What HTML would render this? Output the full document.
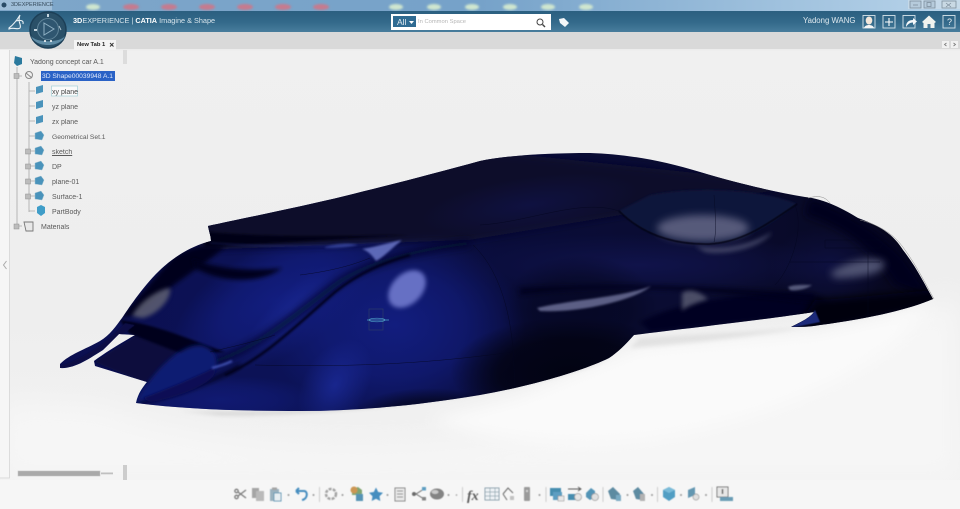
<!DOCTYPE html>
<html><head><meta charset="utf-8"><style>
html,body{margin:0;padding:0;background:#f3f3f3}
#p{position:relative;width:960px;height:509px;overflow:hidden;font-family:"Liberation Sans",sans-serif;background:#f2f2f2}
.t{position:absolute;font-size:7px;color:#5a5a5a;white-space:nowrap;line-height:9px;filter:blur(.25px)}
</style></head><body><div id="p">
<svg width="960" height="509" style="position:absolute;left:0;top:0" viewBox="0 0 960 509">
<defs>
<linearGradient id="bg" x1="0" y1="0" x2="0" y2="1"><stop offset="0" stop-color="#f0f0f0"/><stop offset=".6" stop-color="#eeeeee"/><stop offset="1" stop-color="#f2f2f2"/></linearGradient>
<linearGradient id="hd" x1="0" y1="0" x2="0" y2="1"><stop offset="0" stop-color="#2b5f80"/><stop offset=".5" stop-color="#33698a"/><stop offset="1" stop-color="#4a7f9e"/></linearGradient>
<linearGradient id="tb" x1="0" y1="0" x2="1" y2="0"><stop offset="0" stop-color="#7ea6c9"/><stop offset=".5" stop-color="#76a2c9"/><stop offset="1" stop-color="#b8d4ea"/></linearGradient>
<linearGradient id="body" gradientUnits="userSpaceOnUse" x1="60" y1="0" x2="933" y2="0"><stop offset="0" stop-color="#0b0f50"/><stop offset=".3" stop-color="#0c1358"/><stop offset=".5" stop-color="#090c3a"/><stop offset=".75" stop-color="#0a0c30"/><stop offset="1" stop-color="#06061c"/></linearGradient>
<radialGradient id="gBlue"><stop offset="0" stop-color="#121d7e"/><stop offset=".55" stop-color="#121d7e" stop-opacity=".65"/><stop offset="1" stop-color="#121d7e" stop-opacity="0"/></radialGradient>
<radialGradient id="gBright"><stop offset="0" stop-color="#1b2a98"/><stop offset="1" stop-color="#1b2a98" stop-opacity="0"/></radialGradient>
<radialGradient id="gDark"><stop offset="0" stop-color="#020312"/><stop offset=".6" stop-color="#020312" stop-opacity=".8"/><stop offset="1" stop-color="#020312" stop-opacity="0"/></radialGradient>
<radialGradient id="gNavy"><stop offset="0" stop-color="#10134a"/><stop offset="1" stop-color="#10134a" stop-opacity="0"/></radialGradient>
<filter id="b1" filterUnits="userSpaceOnUse" x="0" y="0" width="960" height="509"><feGaussianBlur stdDeviation="1"/></filter>
<filter id="b2" filterUnits="userSpaceOnUse" x="0" y="0" width="960" height="509"><feGaussianBlur stdDeviation="2"/></filter>
<filter id="b4" filterUnits="userSpaceOnUse" x="0" y="0" width="960" height="509"><feGaussianBlur stdDeviation="4"/></filter>
<filter id="b8" filterUnits="userSpaceOnUse" x="0" y="0" width="960" height="509"><feGaussianBlur stdDeviation="8"/></filter>
<filter id="b14" filterUnits="userSpaceOnUse" x="0" y="0" width="960" height="509"><feGaussianBlur stdDeviation="14"/></filter>
<filter id="b05" filterUnits="userSpaceOnUse" x="0" y="0" width="960" height="509"><feGaussianBlur stdDeviation=".4"/></filter>
<clipPath id="car"><path d="M60 364C70 354 84 350 100 341C110 335 116 326 122 318C133 302 150 276 172 260C184 251 196 245 211 241C211 236 209 232 208 226C240 219 300 207 345 196C390 185 440 172 480 161C510 155 550 153 590 153C625 154 660 160 700 172C740 184 775 192 805 197C825 199 845 210 858 218C880 226 892 233 903 250C917 268 925 285 933 299C905 311 860 320 820 325C810 327 800 327 791 327C798 323 809 319 814 312C770 319 690 328 634 335C625 345 618 352 609 358C580 372 530 386 480 395C420 405 360 411 300 411C250 411 190 410 136 403C138 393 143 387 147 382L95 366L94 361C106 352 118 345 135 335L119 334L103 350C90 358 75 369 60 368Z"/></clipPath>
</defs>
<rect width="960" height="509" fill="url(#bg)"/>
<!-- floor -->
<path d="M100 405C260 470 620 470 940 300L960 300V480H0V400Z" fill="#f6f6f6" filter="url(#b14)"/>
<path d="M520 395L640 345L820 330L930 305C920 340 800 420 640 440C560 450 480 440 430 420Z" fill="#fafafa" filter="url(#b8)"/>
<path d="M180 411C300 416 440 402 610 358C520 396 340 416 220 415Z" fill="#cfcfcf" filter="url(#b2)"/>
<path d="M640 338L800 328L925 303C850 323 740 340 630 348Z" fill="#dadada" filter="url(#b2)" opacity=".7"/>
<!-- car -->
<path d="M60 364C70 354 84 350 100 341C110 335 116 326 122 318C133 302 150 276 172 260C184 251 196 245 211 241C211 236 209 232 208 226C240 219 300 207 345 196C390 185 440 172 480 161C510 155 550 153 590 153C625 154 660 160 700 172C740 184 775 192 805 197C825 199 845 210 858 218C880 226 892 233 903 250C917 268 925 285 933 299C905 311 860 320 820 325C810 327 800 327 791 327C798 323 809 319 814 312C770 319 690 328 634 335C625 345 618 352 609 358C580 372 530 386 480 395C420 405 360 411 300 411C250 411 190 410 136 403C138 393 143 387 147 382L95 366L94 361C106 352 118 345 135 335L119 334L103 350C90 358 75 369 60 368Z" fill="url(#body)"/>
<g clip-path="url(#car)">
<!-- soft colour fields -->
<ellipse cx="395" cy="325" rx="130" ry="95" fill="url(#gBlue)"/>
<ellipse cx="275" cy="300" rx="115" ry="55" transform="rotate(-30 275 300)" fill="url(#gBlue)"/>
<ellipse cx="335" cy="385" rx="32" ry="50" transform="rotate(30 335 385)" fill="url(#gBright)" opacity=".8"/>
<ellipse cx="290" cy="310" rx="60" ry="18" transform="rotate(-45 290 310)" fill="url(#gBright)" opacity=".6"/>
<ellipse cx="220" cy="400" rx="100" ry="25" fill="url(#gBlue)" opacity=".7"/>
<ellipse cx="570" cy="372" rx="120" ry="55" fill="url(#gDark)"/>
<ellipse cx="430" cy="418" rx="80" ry="30" fill="url(#gDark)" opacity=".7"/>
<ellipse cx="640" cy="265" rx="190" ry="32" fill="url(#gNavy)"/>
<ellipse cx="830" cy="265" rx="60" ry="40" fill="url(#gNavy)" opacity=".7"/>
<ellipse cx="580" cy="310" rx="80" ry="55" fill="url(#gDark)" opacity=".45"/>
<!-- roof -->
<path d="M195 215L480 150L810 185L640 212L470 240L200 250Z" fill="#08082a" filter="url(#b4)"/>
<ellipse cx="530" cy="205" rx="110" ry="28" transform="rotate(-8 530 205)" fill="url(#gNavy)" opacity=".7"/>
<path d="M205 232C280 238 340 236 410 235L205 247Z" fill="#040414" filter="url(#b1)"/>
<path d="M210 243C280 248 340 247 400 242" fill="none" stroke="#2a3490" stroke-width="1" filter="url(#b1)" opacity=".6"/>
<!-- sill under crease near front -->
<path d="M640 322C680 300 760 290 815 294L812 314L650 332Z" fill="#050620" filter="url(#b2)"/>
<path d="M520 295C600 285 700 288 830 305L820 296C740 286 620 282 520 288Z" fill="#03031a" filter="url(#b2)" opacity=".8"/>
<!-- nose -->
<path d="M810 198C840 208 880 230 905 258L935 300L895 285C870 245 840 225 805 215Z" fill="#04041a" filter="url(#b4)"/>
<path d="M815 300C860 298 900 292 940 290L935 305L830 328L795 328Z" fill="#03030c" filter="url(#b4)"/>
<path d="M790 328C800 322 812 316 815 310L820 322Z" fill="#1c2a7a" filter="url(#b05)"/>
<!-- crease -->
<path d="M212 362C255 350 295 315 335 285C365 263 415 250 470 243" fill="none" stroke="#05072a" stroke-width="6" filter="url(#b4)"/>
<path d="M225 375C265 358 300 322 335 292C360 272 385 262 410 255" fill="none" stroke="#04051f" stroke-width="2.500" filter="url(#b1)"/>
<path d="M140 402C175 395 215 382 240 365" fill="none" stroke="#04051c" stroke-width="3" filter="url(#b2)"/>
<!-- rear top -->
<path d="M172 258C190 246 205 244 225 246C210 262 170 285 135 315L120 318Z" fill="#05061f" filter="url(#b2)"/>
<path d="M192 258C210 268 250 272 282 268C265 282 225 285 195 268Z" fill="#03031a" filter="url(#b2)"/>
<path d="M132 316C138 304 155 290 170 288C172 300 155 316 142 318Z" fill="#5e6072" filter="url(#b2)" opacity=".85"/>
<!-- fins -->
<path d="M94 362L135 336L180 350L148 384Z" fill="#070a3c" filter="url(#b1)"/>
<path d="M120 320C160 325 195 342 225 352L185 355L130 334Z" fill="#03041c" filter="url(#b1)"/>
<path d="M60 366C80 360 105 345 125 323L135 325L110 345C90 358 75 368 60 368Z" fill="#090e44" filter="url(#b05)"/>
<path d="M136 402C150 375 178 345 200 345C216 347 218 362 216 368C190 385 160 398 136 402Z" fill="#111c72" filter="url(#b2)"/>
<path d="M143 398C170 388 200 375 214 368C222 380 180 398 150 402Z" fill="#0a1055" filter="url(#b1)"/>
<path d="M212 368C220 366 226 364 232 361" stroke="#4a5cc0" stroke-width="2" fill="none" filter="url(#b1)"/>
<!-- window -->
<path d="M619 211C640 232 665 243 710 244C745 242 770 225 797 204C765 190 700 185 650 195Z" fill="#10133a" filter="url(#b1)"/>
<ellipse cx="703" cy="228" rx="46" ry="13" fill="#575a7a" filter="url(#b4)"/>
<path d="M695 246C725 250 750 245 772 232C762 248 725 256 705 252Z" fill="#3c3f62" filter="url(#b2)"/>
<path d="M619 211C640 232 670 245 710 244C745 242 770 222 797 204" fill="none" stroke="#03030c" stroke-width="1.200" filter="url(#b05)"/>
<!-- highlights -->
<path d="M830 273C845 262 870 255 884 262C888 270 870 278 835 278Z" fill="#4f5272" filter="url(#b4)"/>
<path d="M788 287C795 284 805 285 812 285C805 290 795 291 790 290Z" fill="#55587a" filter="url(#b1)"/>
<path d="M537 308C570 300 625 297 651 286C635 300 580 313 540 311Z" fill="#5b5f85" filter="url(#b1)"/>
<path d="M682 293C690 288 700 292 708 299C695 303 685 307 682 311Z" fill="#4c4e66" filter="url(#b2)"/>
<ellipse cx="407" cy="289" rx="22" ry="15" transform="rotate(-45 407 289)" fill="#6670c4" filter="url(#b2)"/>
<path d="M362 249C380 246 395 241 402 240C392 248 385 256 376 261C372 255 368 251 362 249Z" fill="#6c78c8" filter="url(#b1)" opacity=".85"/>
<path d="M325 247C340 243 350 243 358 245C345 248 335 248 325 248Z" fill="#4050a8" filter="url(#b1)" opacity=".7"/>
<!-- surface lines -->
<g fill="none" stroke="#050720" stroke-width=".5" opacity=".8">
<path d="M255 365C340 367 420 365 512 352"/><path d="M210 352C240 345 260 340 275 335"/>
<path d="M473 245C500 270 516 320 514 390"/><path d="M714 195C716 220 716 235 714 242"/>
<path d="M795 205C805 230 790 270 775 285"/>
<path d="M825 240L885 240L880 248L825 248Z"/><path d="M868 245V320"/><path d="M300 275C340 270 360 262 370 258"/>
<path d="M619 211C580 198 530 222 480 225"/><path d="M790 262H880"/>
</g>
</g>
<path d="M808 198C820 195 825 197 830 203M860 220C880 225 895 235 905 250C918 268 926 285 934 299" fill="none" stroke="#888" stroke-width=".5"/>
<!-- axis widget -->
<g fill="none" stroke="#2a3a6a" stroke-width=".7"><rect x="369" y="309" width="14" height="21"/><path d="M367 320H389" stroke="#4fa0c8" stroke-width=".8"/><ellipse cx="377" cy="320" rx="8" ry="1.800" stroke="#4fa0c8" stroke-width=".6"/></g>
<!-- title bar -->
<rect width="960" height="12" fill="url(#tb)"/>
<g filter="url(#b1)"><g fill="#c67a8e"><ellipse cx="131" cy="7" rx="8" ry="3"/><ellipse cx="169" cy="7" rx="8" ry="3"/><ellipse cx="207" cy="7" rx="8" ry="3"/><ellipse cx="245" cy="7" rx="8" ry="3"/><ellipse cx="283" cy="7" rx="8" ry="3"/><ellipse cx="321" cy="7" rx="8" ry="3"/></g>
<g fill="#cfe6cf"><ellipse cx="93" cy="7" rx="7" ry="3"/><ellipse cx="396" cy="7" rx="7" ry="3"/><ellipse cx="434" cy="7" rx="7" ry="3"/><ellipse cx="472" cy="7" rx="7" ry="3"/><ellipse cx="510" cy="7" rx="7" ry="3"/><ellipse cx="548" cy="7" rx="7" ry="3"/><ellipse cx="586" cy="7" rx="7" ry="3"/></g></g>
<rect x="0" y="0" width="52" height="10" fill="#a8c4dc" opacity=".8"/>
<circle cx="4" cy="5" r="2.500" fill="#2b4c66"/>
<rect x="908" y="0" width="52" height="9" fill="#c9dbe8" opacity=".8"/>
<g fill="none" stroke="#7d8e9c" stroke-width=".8"><rect x="910" y="1" width="11" height="7" fill="#b6cbdb"/><path d="M913 5H918"/><rect x="924" y="1" width="11" height="7" fill="#b6cbdb"/><rect x="927" y="2.500" width="4" height="4"/><rect x="942" y="1" width="14" height="7" fill="#c9d9e4"/><path d="M946 3L951 7M951 3L946 7"/></g>
<!-- header -->
<rect y="11" width="960" height="22" fill="url(#hd)"/>
<rect y="32" width="960" height="18" fill="#d9d9d9"/>
<rect y="49" width="960" height="1.500" fill="#ececec"/>
<path d="M9 28C13 25 17 20 20 15C17 22 22 25 20 28C18 30 14 27 9 29ZM16 21C20 20 24 20 23 24" fill="none" stroke="#e8f0f5" stroke-width="1.100"/>
<!-- compass -->
<circle cx="48" cy="30" r="18" fill="#2a5068"/><circle cx="48" cy="30" r="18" fill="none" stroke="#1c3f57" stroke-width="1.500"/>
<path d="M31 36C35 48 61 48 65 36C60 43 36 43 31 36Z" fill="#5f8ca6"/>
<circle cx="48" cy="29" r="10.500" fill="#2f5670" stroke="#5f8499" stroke-width="1"/>
<path d="M44 23L54 29L44 35Z" fill="none" stroke="#8fb0c3" stroke-width="1"/>
<rect x="47" y="14" width="2" height="3" fill="#c5d5df"/><rect x="34" y="29" width="3" height="2" fill="#c5d5df"/><path d="M59 26L61 30" stroke="#a9bfcc"/><circle cx="45" cy="41" r="1" fill="#fff"/><circle cx="51" cy="41" r="1" fill="#fff"/>
<!-- search -->
<rect x="391" y="14" width="160" height="16" fill="#fff"/>
<rect x="393" y="16" width="23" height="11" fill="#2f6b92"/>
<path d="M409 21H414L411.500 24Z" fill="#fff"/>
<circle cx="540" cy="22" r="3" fill="none" stroke="#444" stroke-width="1"/><path d="M542.500 24.500L545 27" stroke="#444" stroke-width="1.400"/>
<path d="M559 19L564 18L569 23L565 27L560 23Z" fill="#f4f7f9"/>
<!-- right icons -->
<g fill="none" stroke="#d8e5ec" stroke-width=".9"><rect x="863" y="15.500" width="12" height="12.500"/><rect x="883" y="15.500" width="12" height="12.500"/><rect x="903" y="15.500" width="12" height="12.500"/><rect x="943" y="15.500" width="12" height="12.500"/><path d="M889 18V26M885 22H893" stroke="#fff" stroke-width="1.100"/></g>
<ellipse cx="869" cy="20.500" rx="3.300" ry="4" fill="#f2e6da"/><path d="M864 28C865 24 873 24 874 28Z" fill="#f5f5f5"/>
<path d="M906 27C906 22 909 20 913 20V18L917 21.500L913 25V22.500C910 22.500 908 24 906 27Z" fill="#f5f8fa"/>
<path d="M922 22L929 15.500L936 22L934.500 23V28H923.500V23Z" fill="#f0f2ee"/><rect x="927.500" y="24" width="3" height="4" fill="#4b7b98"/>
<!-- tab arrows -->
<rect x="942" y="41" width="7" height="7" fill="#f1f1f1"/><rect x="951" y="41" width="7" height="7" fill="#f1f1f1"/><path d="M946.500 43L944.500 44.500L946.500 46M953.500 43L955.500 44.500L953.500 46" fill="none" stroke="#777" stroke-width=".8"/>
<!-- tab -->
<rect x="74" y="40" width="42" height="10" fill="#f4f4f4"/>
<path d="M110 43L113.500 46.500M113.500 43L110 46.500" stroke="#333" stroke-width="1"/>
<!-- left strip -->
<rect x="0" y="50" width="9" height="427" fill="#f6f6f6"/><path d="M9.500 50V478H0" fill="none" stroke="#d6d6d6" stroke-width=".8"/>
<path d="M6.500 261L3.500 265L6.500 269" fill="none" stroke="#aaa" stroke-width="1"/>
<rect x="123" y="50" width="4" height="14" fill="#dcdcdc"/>
<!-- bottom scroll -->
<rect x="18" y="471" width="82" height="5" fill="#a9a9a9" stroke="#c4c4c4" stroke-width=".6"/>
<rect x="101" y="472.500" width="12" height="1.800" fill="#c0c0c0"/>
<rect x="123" y="465" width="4" height="15" fill="#cccccc"/>
<rect y="480" width="960" height="29" fill="#f6f6f6"/>
<!-- tree lines -->
<g fill="none" stroke="#a8a8a8" stroke-width=".8">
<path d="M17 67V226M17 76H22M29 82V212M29 91H35M29 106H35M29 121H35M29 136H35M29 151H35M29 166H35M29 181H35M29 196H35M29 211H35M17 226H22"/>
</g>
<g fill="#bcbcbc" stroke="#8f8f8f" stroke-width=".5"><rect x="14" y="73.500" width="5" height="5"/><rect x="25.500" y="149" width="5" height="5"/><rect x="25.500" y="164" width="5" height="5"/><rect x="25.500" y="179" width="5" height="5"/><rect x="25.500" y="194" width="5" height="5"/><rect x="14" y="224" width="5" height="5"/></g>
<path d="M15 56L22 58V64L17 66L14 63Z" fill="#2b7a9e"/>
<circle cx="29" cy="75" r="3.500" fill="none" stroke="#888" stroke-width="1"/><path d="M26 73L32 78" stroke="#888"/>
<g fill="#4a93bb"><path d="M36 87L43 85V92L36 94Z"/><path d="M36 102L43 100V107L36 109Z"/><path d="M36 117L43 115V122L36 124Z"/></g>
<g fill="#4a93bb" stroke="#9bbfcf" stroke-width=".5"><path d="M35 133L41 131L44 135L42 140L35 139Z"/><path d="M35 148L41 146L44 150L42 155L35 154Z"/><path d="M35 163L41 161L44 165L42 170L35 169Z"/><path d="M35 178L41 176L44 180L42 185L35 184Z"/><path d="M35 193L41 191L44 195L42 200L35 199Z"/></g>
<path d="M37 207L41 205L45 207V213L41 216L37 213Z" fill="#3f9dc8"/>
<path d="M24 222H33V231H26Z" fill="#e8e8e8" stroke="#777" stroke-width=".9"/>
<rect x="41" y="71" width="74" height="10" fill="#2a62c6"/>
<rect x="51.500" y="86" width="26" height="10" fill="#fafafa" stroke="#a4d0d8" stroke-width=".7"/>
<!-- toolbar icons -->
<g filter="url(#b05)" opacity=".88">
<g fill="none" stroke="#6c6c6c" stroke-width="1.300"><circle cx="236.500" cy="491" r="1.700"/><circle cx="236.500" cy="497" r="1.700"/><path d="M238 492L246 498M238 496L246 490"/></g>
<rect x="252" y="488" width="7" height="10" fill="#9a9a9a"/><rect x="256" y="491" width="8" height="10" fill="#b2b2b2"/>
<rect x="270" y="489" width="9" height="12" fill="#8fa9b8"/><rect x="274" y="493" width="7" height="8" fill="#e5eef2" stroke="#4d8fb0"/><rect x="272" y="487.500" width="5" height="2.500" fill="#999"/>
<path d="M296 491H304C308 491 308 499 302 500M296 491L299 488M296 491L299 494" fill="none" stroke="#2f7fb8" stroke-width="2"/>
<circle cx="331" cy="494" r="5" fill="none" stroke="#9a9a9a" stroke-width="2.500" stroke-dasharray="3 1.200"/>
<path d="M352 489L358 487L362 490V495H352Z" fill="#6f9a5e"/><circle cx="354" cy="490" r="3.500" fill="#c78a3e"/><rect x="356" y="494" width="7" height="7" fill="#3f87ad"/>
<path d="M376 487.500L378.200 492L383 492.800L379.500 496.300L380.300 501L376 498.800L371.700 501L372.500 496.300L369 492.800L373.800 492Z" fill="#2f80b8"/>
<rect x="395" y="488" width="10" height="13" fill="#e8e8e8" stroke="#777"/><path d="M397 491H403M397 494H403M397 497H403" stroke="#777" stroke-width=".9"/>
<path d="M416 494L424 489M416 494L424 499" stroke="#555" stroke-width="1"/><circle cx="414" cy="494" r="2" fill="#555"/><rect x="422" y="487" width="4" height="3.500" fill="#4a93bb"/><rect x="422" y="497" width="4" height="3.500" fill="#777"/>
<ellipse cx="437" cy="494" rx="7" ry="5.500" fill="#757575"/><ellipse cx="435" cy="492" rx="3.500" ry="2" fill="#c4c4c4"/>
<text x="467" y="500" font-family="Liberation Serif" font-style="italic" font-weight="bold" font-size="14" fill="#444">fx</text>
<rect x="485" y="488" width="14" height="12" fill="#eef3f6" stroke="#7f97a5"/><path d="M485 492H499M485 496H499M490 488V500M495 488V500" stroke="#7f97a5" stroke-width=".7"/>
<path d="M503 494L508 488L513 493M503 494L507 500" fill="none" stroke="#555" stroke-width="1"/><rect x="510" y="496" width="4" height="4" fill="#bbb"/>
<rect x="524" y="487" width="6" height="14" rx="1" fill="#8e8e8e"/><rect x="526" y="490" width="2" height="2" fill="#ccc"/>
<rect x="550" y="488" width="11" height="8" fill="#2f7fa6"/><rect x="553" y="492" width="9" height="8" fill="#4a93bb"/><rect x="558" y="496" width="6" height="5" fill="#e6e6e6" stroke="#777" stroke-width=".5"/>
<path d="M568 489H581M578 487L581 489L578 491" fill="none" stroke="#444" stroke-width=".9"/><rect x="568" y="494" width="8" height="6" fill="#2f7fa6"/><circle cx="578" cy="497" r="3.500" fill="#e3e3e3" stroke="#888" stroke-width=".7"/>
<path d="M586 493L591 488L595 491V497L590 500L586 497Z" fill="#3d87ae"/><circle cx="595" cy="497" r="3.500" fill="#dedede" stroke="#888" stroke-width=".7"/>
<path d="M608 491L613 487L620 494L619 500L611 499Z" fill="#4a7d96"/><rect x="616" y="495" width="5" height="6" fill="#6aa1bd"/>
<path d="M633 491L638 487L644 494L642 500L636 499Z" fill="#4a7d96"/><rect x="640" y="494" width="5" height="7" fill="#a9a9a9"/>
<path d="M663 490L669 487L675 490V497L669 501L663 497Z" fill="#3b92bd"/><path d="M663 490L669 493L675 490L669 487Z" fill="#6ab3d4"/>
<path d="M688 490L695 487V495L688 498Z" fill="#4f8aa8"/><circle cx="696" cy="497" r="3" fill="#ddd" stroke="#888" stroke-width=".7"/>
<rect x="717" y="487" width="11" height="10" fill="#e5e5e5" stroke="#666"/><path d="M722.500 489V494" stroke="#444" stroke-width="1.500"/><rect x="720" y="497" width="13" height="4" fill="#5790ad"/>
<g fill="#8c8c8c"><circle cx="288.500" cy="495" r="1"/><circle cx="313.500" cy="495" r="1"/><circle cx="342.500" cy="495" r="1"/><circle cx="387.500" cy="495" r="1"/><circle cx="448.500" cy="495" r="1"/><circle cx="456.500" cy="495" r=".8"/><circle cx="539.500" cy="495" r="1"/><circle cx="627.500" cy="495" r="1"/><circle cx="652" cy="495" r="1"/><circle cx="681" cy="495" r="1"/><circle cx="706" cy="495" r="1"/></g>
<g stroke="#c9c9c9" stroke-width="1"><path d="M319.500 487V502M462.500 487V502M546 487V502M603 487V502M657.500 487V502M712 487V502"/></g>
</g>
</svg>
<div class="t" style="left:11px;top:0.500px;font-size:5.500px;color:#34495a;line-height:9px">3DEXPERIENCE</div>
<div class="t" style="left:73px;top:16px;font-size:7.300px;color:#d9e6ed;line-height:10px"><b style="color:#fff">3D</b>EXPERIENCE | <b style="color:#fff">CATIA</b> Imagine &amp; Shape</div>
<div class="t" style="left:397px;top:17px;font-size:8.500px;color:#dfe9ef;line-height:10px">All</div>
<div class="t" style="left:418px;top:18px;font-size:5.800px;color:#b6b6b6;line-height:8px">In Common Space</div>
<div class="t" style="left:803px;top:16px;font-size:7.800px;color:#dfe9ef;line-height:10px">Yadong WANG</div>
<div class="t" style="left:947px;top:17px;font-size:9px;color:#e6eef2;line-height:10px">?</div>
<div class="t" style="left:77px;top:41px;font-size:5.800px;color:#222;font-weight:bold;line-height:8px">New Tab 1</div>
<div class="t" style="left:30px;top:58px">Yadong concept car A.1</div>
<div class="t" style="left:42px;top:72px;font-size:6.700px;color:#dfe8fa">3D Shape00039948 A.1</div>
<div class="t" style="left:52px;top:88px;color:#444">xy plane</div>
<div class="t" style="left:52px;top:103px">yz plane</div>
<div class="t" style="left:52px;top:118px">zx plane</div>
<div class="t" style="left:52px;top:133px;font-size:6.700px">Geometrical Set.1</div>
<div class="t" style="left:52px;top:148px;text-decoration:underline">sketch</div>
<div class="t" style="left:52px;top:163px">DP</div>
<div class="t" style="left:52px;top:178px">plane-01</div>
<div class="t" style="left:52px;top:193px">Surface-1</div>
<div class="t" style="left:52px;top:208px">PartBody</div>
<div class="t" style="left:41px;top:223px">Materials</div>
</div></body></html>
